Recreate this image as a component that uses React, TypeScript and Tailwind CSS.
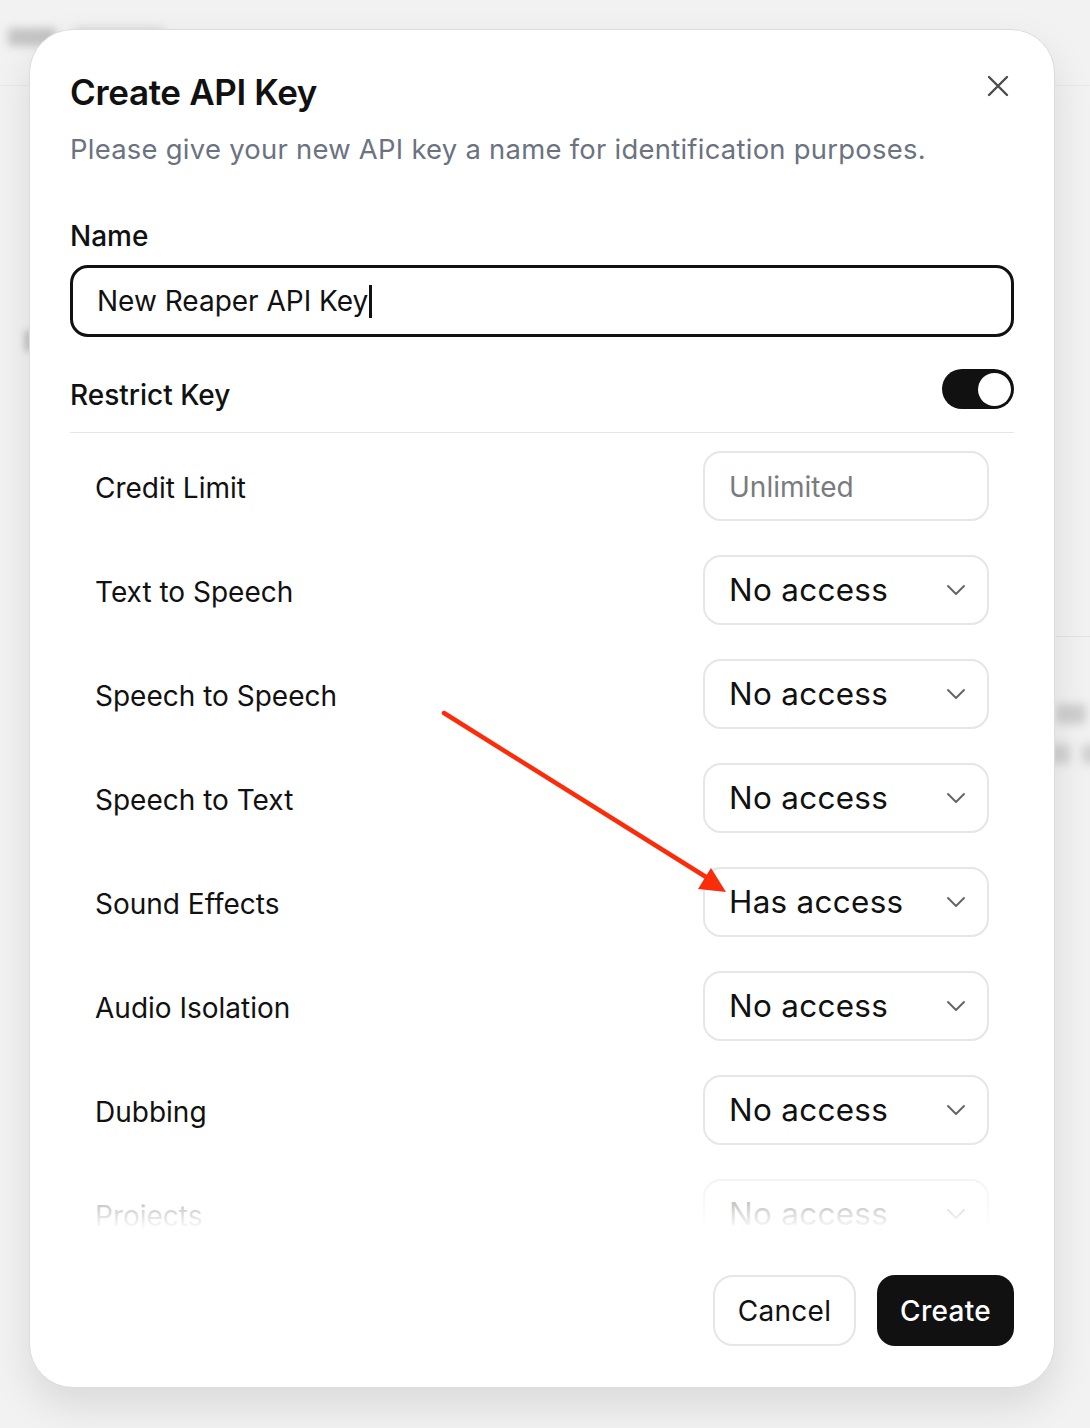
import React from 'react';
import { ChevronDown } from 'lucide-react';

const ROWS: { label: string; value: string; kind: 'input' | 'select' }[] = [
  { label: 'Credit Limit', value: 'Unlimited', kind: 'input' },
  { label: 'Text to Speech', value: 'No access', kind: 'select' },
  { label: 'Speech to Speech', value: 'No access', kind: 'select' },
  { label: 'Speech to Text', value: 'No access', kind: 'select' },
  { label: 'Sound Effects', value: 'Has access', kind: 'select' },
  { label: 'Audio Isolation', value: 'No access', kind: 'select' },
  { label: 'Dubbing', value: 'No access', kind: 'select' },
  { label: 'Projects', value: 'No access', kind: 'select' },
];

export default function App() {
  return (
    <div className="relative w-[1090px] h-[1428px] overflow-hidden bg-[#f2f2f2] font-['Inter','Liberation_Sans',sans-serif] text-[#111]">
      {/* blurred page behind the dialog */}
      <div className="absolute left-0 top-0 w-full h-[86px] border-b border-[#e8e8e8]" />
      <div className="absolute left-[8px] top-[28px] flex gap-[18px] blur-[4px]">
        <div className="h-[18px] w-[48px] rounded bg-[#c4c4c4]" />
        <div className="h-[18px] w-[90px] rounded bg-[#d4d4d4]" />
      </div>
      <div className="absolute left-[24px] top-[330px] h-[22px] w-[10px] rounded bg-[#c8c8c8] blur-[3px]" />
      <div className="absolute left-[1056px] top-[704px] h-[20px] w-[30px] rounded bg-[#cfcfcf] blur-[4px]" />
      <div className="absolute left-[1050px] top-[744px] flex gap-[12px] blur-[4px]">
        <div className="h-[20px] w-[20px] rounded bg-[#d2d2d2]" />
        <div className="h-[20px] w-[20px] rounded bg-[#d2d2d2]" />
      </div>
      <div className="absolute left-[1056px] top-[636px] h-px w-[40px] bg-[#e2e2e2]" />

      <div className="relative pl-[29px] pt-[29px]">
        <div className="w-[1026px] rounded-[44px] border border-[#dcdcdc] bg-white px-[40px] pt-[42px] pb-[41px] shadow-[0_18px_40px_rgba(0,0,0,0.10)]">
          {/* Header */}
          <div className="flex items-start justify-between">
            <div>
              <h2 className="text-[35px] leading-[40px] font-semibold tracking-[-0.01em]">Create API Key</h2>
              <p className="mt-[19px] text-[27.4px] leading-[36px] text-[#6b7280] tracking-[0.01em]">
                Please give your new API key a name for identification purposes.
              </p>
            </div>
            <button className="mt-[3px] mr-[5px] text-[#4b4b4b]">
              <svg width="22" height="22" viewBox="0 0 22 22" fill="none" stroke="currentColor" strokeWidth="2.4" strokeLinecap="round">
                <path d="M2 2L20 20M20 2L2 20" />
              </svg>
            </button>
          </div>

          {/* Name */}
          <label className="mt-[53px] block text-[28px] leading-[32px] font-medium">Name</label>
          <div className="mt-[13px] flex h-[72px] items-center rounded-[18px] border-[3px] border-[#111] px-[24px]">
            <span className="text-[28px] leading-none">New Reaper API Key</span>
            <span className="ml-[1px] h-[33px] w-[3px] bg-[#111]" />
          </div>

          {/* Restrict */}
          <div className="mt-[32px] flex h-[40px] items-center justify-between">
            <span className="pt-[12px] text-[28px] leading-[32px] font-medium">Restrict Key</span>
            <div className="flex h-[40px] w-[72px] items-center justify-end rounded-full bg-[#111] pr-[3px]">
              <div className="h-[33px] w-[33px] rounded-full bg-white" />
            </div>
          </div>
          <div className="mt-[23px] h-px bg-[#e5e5e5]" />

          {/* Permission rows */}
          <div className="relative h-[797px] overflow-hidden">
            <div className="flex flex-col gap-[34px] px-[25px] pt-[18px]">
              {ROWS.map(r => (
                <div key={r.label} className="flex h-[70px] items-center justify-between">
                  <span className="text-[28px] leading-[32px] pt-[3px]">{r.label}</span>
                  <div className="flex h-[70px] w-[286px] items-center justify-between rounded-[18px] border-2 border-[#e6e6e6] pl-[24px] pr-[15px]">
                    {r.kind === 'input' ? (
                      <span className="text-[28px] pt-[2px] text-[#7a7a80]">{r.value}</span>
                    ) : (
                      <>
                        <span className="text-[31.4px] pt-[2px] tracking-[0.01em]">{r.value}</span>
                        <ChevronDown size={32} strokeWidth={1.5} className="text-[#666]" />
                      </>
                    )}
                  </div>
                </div>
              ))}
            </div>
            <div className="pointer-events-none absolute bottom-0 left-0 h-[90px] w-full bg-gradient-to-b from-white/0 via-white/60 to-white" />
          </div>

          {/* Footer */}
          <div className="mt-[45px] flex justify-end gap-[21px]">
            <button className="h-[71px] w-[143px] rounded-[20px] border-2 border-[#e6e6e6] text-[28px] tracking-[0.01em]">Cancel</button>
            <button className="h-[71px] w-[137px] rounded-[18px] bg-[#111] text-[28px] font-medium text-white tracking-[0.01em]">Create</button>
          </div>
        </div>
      </div>

      {/* red annotation arrow */}
      <svg className="pointer-events-none absolute left-0 top-0" width="1090" height="1428">
        <line x1="444" y1="713" x2="706" y2="877" stroke="#fb2c0a" strokeWidth="4.5" strokeLinecap="round" />
        <polygon points="726,892 698,889 711,868" fill="#fb2c0a" />
      </svg>
    </div>
  );
}
